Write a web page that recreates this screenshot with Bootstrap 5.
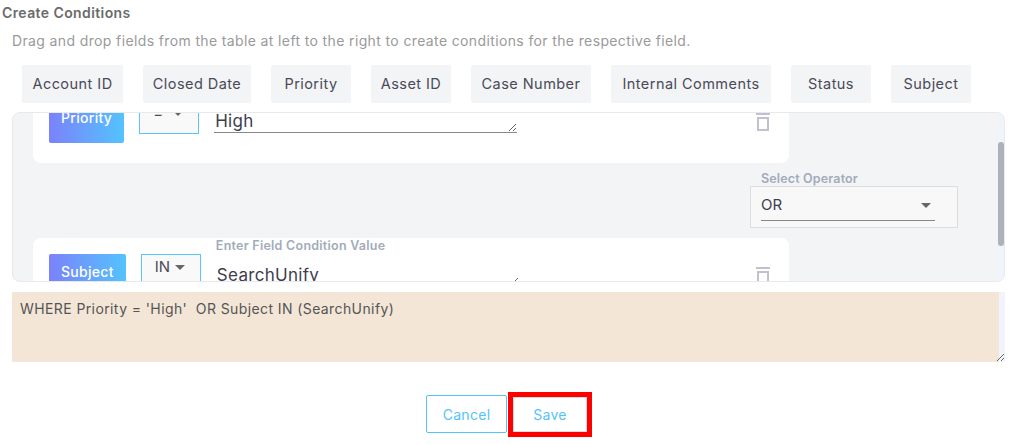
<!DOCTYPE html>
<html lang="en">
<head>
    <meta charset="UTF-8">
    <title>Create Conditions</title>
    <link href="https://cdn.jsdelivr.net/npm/bootstrap@5.3.0/dist/css/bootstrap.min.css" rel="stylesheet">
    <style>
        html, body { height: 444px; overflow: hidden; }
        body { font-family: Inter, "Liberation Sans", sans-serif; color: #4a4a58; background: #fff; }
        .page-title { margin: 5px 0 0 2px; font-size: 14px; line-height: 16px; font-weight: 600; color: #6b6b6b; letter-spacing: .4px; }
        .page-hint { margin: 11px 0 0 12px; font-size: 14px; line-height: 18px; color: #9a9a9a; letter-spacing: .37px; }
        .field-chips { display: grid; grid-template-columns: 101px 108px 80px 80px 120px 160px 80px 80px; gap: 20px; margin: 15px 0 9px 22px; }
        .field-chip { height: 38px; background: #f3f4f6; border-radius: 2px; font-size: 14.5px; line-height: 38px; letter-spacing: .45px; text-align: center; white-space: nowrap; }
        .rule-box { position: relative; margin: 0 6px 0 12px; height: 170px; overflow: hidden; background: #f3f4f6; border: 1px solid #e9e9ec; border-radius: 8px; }
        .rule-scroll { margin-top: -29px; padding: 0 215px 0 20px; }
        .rule-card { height: 79px; padding: 16px 18px 0 16px; background: #fff; border-radius: 8px; gap: 15px; }
        .rule-card + .rule-op { margin-top: 8px; }
        .field-tag { height: 43px; padding: 9px 12px 0; background: linear-gradient(90deg, #7b82fa, #53c3fe); border-radius: 2px; color: #fff; font-size: 14px; line-height: 18px; font-weight: 500; letter-spacing: .3px; }
        .op-pick { width: 60px; height: 34px; padding: 0 15px 8px 13px; border: 1px solid #5bc4fe; background: #f9f9f9; font-size: 15px; line-height: 20px; }
        .caret-down { width: 0; height: 0; border-left: 5.5px solid transparent; border-right: 5.5px solid transparent; border-top: 5px solid #666; }
        .value-wrap { width: 303px; position: relative; }
        .value-label { position: absolute; top: -15px; left: 0; font-size: 12.5px; line-height: 14px; font-weight: 600; color: #a3abba; letter-spacing: .25px; white-space: nowrap; }
        .value-input { display: block; width: 303px; height: 33px; padding: 10px 1px 0; border: 0; border-bottom: 1px solid #888; outline: 0; font-size: 17px; line-height: 22px; letter-spacing: .3px; color: #3d3d4e; overflow: hidden; background: transparent; }
        .bin-icon { display: block; margin: 13px 0 0 auto; color: #c2c1d2; }
        .rule-op { width: 208px; margin-left: 717px; height: 67px; padding-top: 1px; }
        .op-label { font-size: 12.5px; line-height: 13px; font-weight: 600; color: #a3abba; letter-spacing: .15px; padding-left: 11px; }
        .op-box { height: 42px; margin-top: 1px; padding: 0 22px 0 10px; background: #f8f8f8; border: 1px solid #ddd; }
        .op-line { height: 34px; padding: 4px 4px 0 0; border-bottom: 1px solid #888; font-size: 15px; color: #3d3d4e; }
        .scroll-track { position: absolute; top: 0; right: 0; bottom: 0; width: 7px; background: #f1f4fa; }
        .scroll-thumb { position: absolute; top: 29px; right: 0; width: 6px; height: 104px; background: #adb1b9; border-radius: 3px; }
        .sql-text { display: block; width: 993px; height: 70px; margin: 10px 0 0 12px; padding: 7px 8px; border: 0; outline: 0; border-radius: 0; background: linear-gradient(90deg, #f3e6d7 987px, #f1f4fa 987px); color: #555; font-size: 14px; line-height: 20px; letter-spacing: .4px; }
        .page-actions { margin-top: 30px; padding-left: 426px; }
        .act-btn { --bs-btn-padding-y: 0; --bs-btn-padding-x: 0; width: 81px; height: 38px; line-height: 37px; font-size: 14px; letter-spacing: .3px; color: #53c3fe; border: 1px solid #53c3fe; border-radius: 2px; background: #fff; }
        .act-btn:hover { color: #53c3fe; background: #fff; border-color: #53c3fe; }
        .page-actions > .act-btn { margin-top: -2px; }
        .save-mark { margin-left: 1px; border: 5px solid #f00; }
        .save-mark .act-btn { width: 74px; height: 35px; line-height: 33px; border-color: #ddd; border-radius: 0; display: block; }
    </style>
</head>
<body>
    <h1 class="page-title">Create Conditions</h1>
    <p class="page-hint">Drag and drop fields from the table at left to the right to create conditions for the respective field.</p>

    <!-- Fields to drag -->
    <div class="field-chips">
        <div class="field-chip">Account ID</div>
        <div class="field-chip">Closed Date</div>
        <div class="field-chip">Priority</div>
        <div class="field-chip">Asset ID</div>
        <div class="field-chip">Case Number</div>
        <div class="field-chip">Internal Comments</div>
        <div class="field-chip">Status</div>
        <div class="field-chip">Subject</div>
    </div>

    <!-- Conditions -->
    <div class="rule-box">
        <div class="rule-scroll">
            <div class="rule-card d-flex align-items-start">
                <div class="field-tag">Priority</div>
                <div class="op-pick d-flex justify-content-between align-items-center"><span>=</span><span class="caret-down"></span></div>
                <div class="value-wrap"><textarea class="value-input" rows="1">High</textarea></div>
                <svg class="bin-icon" width="16" height="18" viewBox="0 0 16 18" fill="none" stroke="currentColor" stroke-width="2"><path d="M1 1h14"/><path d="M3 5h10v12H3z"/></svg>
            </div>
            <div class="rule-op">
                <div class="op-label">Select Operator</div>
                <div class="op-box"><div class="op-line d-flex justify-content-between align-items-center"><span>OR</span><span class="caret-down"></span></div></div>
            </div>
            <div class="rule-card d-flex align-items-start">
                <div class="field-tag">Subject</div>
                <div class="op-pick d-flex justify-content-between align-items-center"><span>IN</span><span class="caret-down"></span></div>
                <div class="value-wrap"><span class="value-label">Enter Field Condition Value</span><textarea class="value-input" rows="1">SearchUnify</textarea></div>
                <svg class="bin-icon" width="16" height="18" viewBox="0 0 16 18" fill="none" stroke="currentColor" stroke-width="2"><path d="M1 1h14"/><path d="M3 5h10v12H3z"/></svg>
            </div>
        </div>
        <div class="scroll-track"></div>
        <div class="scroll-thumb"></div>
    </div>

    <textarea class="sql-text">WHERE Priority = 'High'  OR Subject IN (SearchUnify)</textarea>

    <div class="page-actions d-flex align-items-center">
        <button type="button" class="btn act-btn">Cancel</button>
        <div class="save-mark"><button type="button" class="btn act-btn">Save</button></div>
    </div>
</body>
</html>
